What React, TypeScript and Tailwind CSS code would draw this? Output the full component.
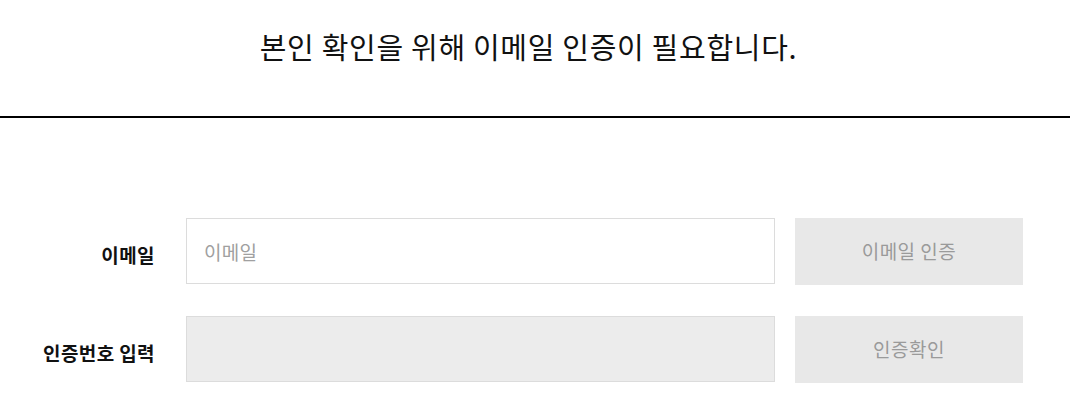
const font = "font-['Noto_Sans_CJK_KR','Noto_Sans',sans-serif]";

export default function App() {
  return (
    <div className={`w-[1070px] h-[411px] bg-white ${font}`}>
      <div className="h-[118px] border-b-2 border-black flex justify-center pt-[26px] pr-[13px]">
        <h2 className="text-[29px] leading-[40px] font-normal text-[#111] tracking-[0.7px]">
          본인 확인을 위해 이메일 인증이 필요합니다.
        </h2>
      </div>

      <div className="pt-[100px] flex flex-col gap-[31px]">
        <div className="flex items-start">
          <label className="w-[155px] h-[66px] flex items-center justify-end text-[19px] font-bold text-[#111] pt-[9px] tracking-[0.4px]">이메일</label>
          <input
            placeholder="이메일"
            className="ml-[31px] w-[589px] h-[66px] border border-[#dcdcdc] px-[17px] text-[19px] text-[#333] placeholder:text-[#a0a0a0] outline-none tracking-[0.3px]"
          />
          <button className="ml-[20px] w-[228px] h-[67px] bg-[#e8e8e8] text-[19px] text-[#9a9a9a] tracking-[0.5px]">이메일 인증</button>
        </div>

        <div className="flex items-start">
          <label className="w-[155px] h-[66px] flex items-center justify-end text-[19px] font-bold text-[#111] pt-[9px] tracking-[0.4px]">인증번호 입력</label>
          <input
            disabled
            className="ml-[31px] w-[589px] h-[66px] border border-[#dcdcdc] bg-[#ececec] px-[17px] text-[19px] outline-none"
          />
          <button className="ml-[20px] w-[228px] h-[67px] bg-[#e8e8e8] text-[19px] text-[#9a9a9a] tracking-[0.5px]">인증확인</button>
        </div>
      </div>
    </div>
  );
}
